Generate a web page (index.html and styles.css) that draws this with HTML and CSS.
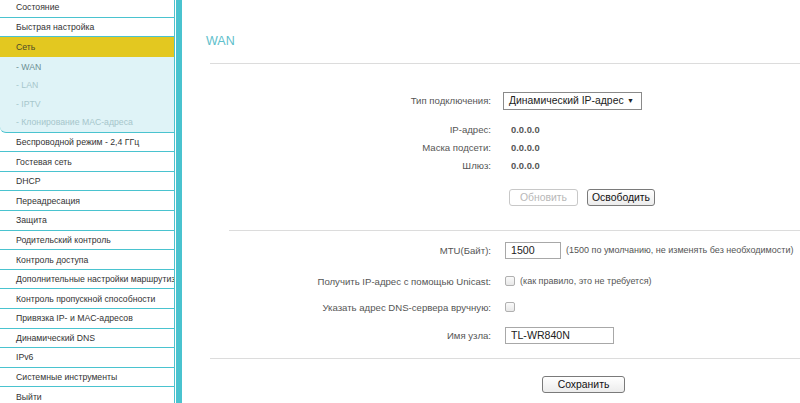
FILE: index.html
```html
<!DOCTYPE html>
<html lang="ru">
<head>
  <meta charset="UTF-8">
  <title>WAN</title>
  <link rel="stylesheet" href="styles.css">
</head>
<body>

  <!-- Left menu -->
  <aside class="sidebar">
    <ul class="menu">
      <li class="menu-item">Состояние</li>
      <li class="menu-item">Быстрая настройка</li>
      <li class="menu-item active">Сеть</li>
      <li class="submenu">
        <div class="sub-item current">- WAN</div>
        <div class="sub-item">- LAN</div>
        <div class="sub-item">- IPTV</div>
        <div class="sub-item">- Клонирование MAC-адреса</div>
      </li>
      <li class="menu-item">Беспроводной режим - 2,4 ГГц</li>
      <li class="menu-item">Гостевая сеть</li>
      <li class="menu-item">DHCP</li>
      <li class="menu-item">Переадресация</li>
      <li class="menu-item">Защита</li>
      <li class="menu-item">Родительский контроль</li>
      <li class="menu-item">Контроль доступа</li>
      <li class="menu-item">Дополнительные настройки маршрутиза</li>
      <li class="menu-item">Контроль пропускной способности</li>
      <li class="menu-item">Привязка IP- и MAC-адресов</li>
      <li class="menu-item">Динамический DNS</li>
      <li class="menu-item">IPv6</li>
      <li class="menu-item">Системные инструменты</li>
      <li class="menu-item">Выйти</li>
    </ul>
  </aside>

  <!-- Main panel -->
  <main class="content">
    <h1 class="page-title">WAN</h1>
    <hr class="divider">

    <section class="form-block first">
      <div class="row row-select">
        <span class="label">Тип подключения:</span>
        <div class="select">
          <span>Динамический IP-адрес</span>
          <span class="arrow">&#9660;</span>
        </div>
      </div>
      <div class="row row-info">
        <span class="label">IP-адрес:</span>
        <span class="value">0.0.0.0</span>
      </div>
      <div class="row row-info">
        <span class="label">Маска подсети:</span>
        <span class="value">0.0.0.0</span>
      </div>
      <div class="row row-info">
        <span class="label">Шлюз:</span>
        <span class="value">0.0.0.0</span>
      </div>
      <div class="row row-buttons">
        <span class="label"></span>
        <div class="buttons">
          <button class="btn disabled" disabled>Обновить</button>
          <button class="btn">Освободить</button>
        </div>
      </div>
    </section>

    <hr class="divider short">

    <section class="form-block second">
      <div class="row row-mtu">
        <span class="label">MTU(Байт):</span>
        <div class="field">
          <input class="text-input mtu" type="text" value="1500">
          <span class="hint">(1500 по умолчанию, не изменять без необходимости)</span>
        </div>
      </div>
      <div class="row row-unicast">
        <span class="label">Получить IP-адрес с помощью Unicast:</span>
        <div class="field">
          <span class="checkbox"></span>
          <span class="hint">(как правило, это не требуется)</span>
        </div>
      </div>
      <div class="row row-dns">
        <span class="label">Указать адрес DNS-сервера вручную:</span>
        <div class="field">
          <span class="checkbox"></span>
        </div>
      </div>
      <div class="row row-host">
        <span class="label">Имя узла:</span>
        <div class="field">
          <input class="text-input host" type="text" value="TL-WR840N">
        </div>
      </div>
    </section>

    <hr class="divider">

    <div class="save-bar">
      <button class="btn save">Сохранить</button>
    </div>
  </main>

</body>
</html>
```

FILE: styles.css
```css
/* Reset and basic styles */
* {
  margin: 0;
  padding: 0;
  box-sizing: border-box;
}

body {
  display: flex;
  width: 800px;
  height: 403px;
  overflow: hidden;
  background: #fff;
  font-family: "Liberation Sans", Arial, sans-serif;
  color: #444;
}

/* Sidebar */
.sidebar {
  width: 182px;
  flex-shrink: 0;
  padding-right: 1px;
  border-right: 6px solid #4ac3cf;
  background: #fff;
  overflow: hidden;
}

.menu {
  list-style: none;
  margin-top: -2px;
}

.menu-item {
  height: 19.6px;
  display: flex;
  align-items: center;
  padding-left: 16px;
  font-size: 8.7px;
  color: #333;
  white-space: nowrap;
  overflow: hidden;
  border-bottom: 1.6px solid #4ac3cf;
  border-right: 1px solid #4ac3cf;
}

.menu-item.active {
  background: #e3c820;
  color: #4a4a2a;
  border-bottom: none;
}

.submenu {
  background: #dff3f7;
  border-bottom: 1.6px solid #4ac3cf;
  border-right: 1px solid #4ac3cf;
  border-bottom-left-radius: 6px;
  padding-top: 0.5px;
}

.sub-item {
  height: 18.6px;
  display: flex;
  align-items: center;
  padding-left: 16px;
  font-size: 8.7px;
  color: #a6c6cb;
  white-space: nowrap;
}

.sub-item.current {
  color: #6c8f94;
}

/* Main panel */
.content {
  flex: 1;
  padding-left: 28px;
}

.page-title {
  margin-top: 34px;
  margin-left: -4px;
  height: 16px;
  font-size: 12.5px;
  font-weight: normal;
  color: #5ec0cc;
}

.divider {
  border: none;
  border-top: 1.5px solid #dcdcdc;
}

.page-title + .divider {
  margin-top: 13px;
}

.divider.short {
  margin-left: 19px;
}

.form-block.first {
  padding-top: 27px;
  padding-bottom: 24px;
}

.form-block.second {
  padding-top: 10px;
  padding-bottom: 14px;
}

.row {
  display: flex;
  align-items: center;
  font-size: 9.6px;
  white-space: nowrap;
}

.label {
  width: 295px;
  flex-shrink: 0;
  text-align: right;
  padding-right: 14px;
  color: #555;
}

.row-select { height: 19px; margin-bottom: 10px; }
.row-info { height: 18px; }
.row-buttons { height: 18px; margin-top: 14px; }
.row-mtu { height: 18px; margin-bottom: 13px; }
.row-unicast { height: 18px; margin-bottom: 8px; }
.row-dns { height: 18px; margin-bottom: 10px; }
.row-host { height: 18px; }

.value {
  font-weight: bold;
  color: #555;
  font-size: 9.4px;
  margin-left: 6px;
}

.select {
  width: 139px;
  height: 18px;
  margin-left: -2px;
  display: flex;
  align-items: center;
  justify-content: space-between;
  padding: 0 7px 0 5px;
  border: 1px solid #8a8a8a;
  font-size: 10.4px;
  color: #222;
}

.select .arrow {
  font-size: 7px;
}

.buttons {
  display: flex;
  gap: 9px;
  margin-left: 4px;
}

.btn {
  height: 17px;
  padding: 0 4px;
  border: 1px solid #7a7a7a;
  border-radius: 3px;
  background: linear-gradient(#ffffff, #ececec);
  font-family: "Liberation Sans", Arial, sans-serif;
  font-size: 10.4px;
  color: #111;
}

.btn.disabled {
  width: 69px;
  border-color: #c8c8c8;
  color: #b8b8b8;
  background: #fff;
}

.field {
  display: flex;
  align-items: center;
  gap: 5px;
}

.text-input {
  height: 17px;
  border: 1px solid #a8a8a8;
  padding: 0 5px;
  font-family: "Liberation Sans", Arial, sans-serif;
  font-size: 10.6px;
  color: #222;
  outline: none;
}

.text-input.mtu { width: 56px; }
.text-input.host { width: 109px; }

.hint {
  color: #555;
  font-size: 9px;
  white-space: nowrap;
}

.checkbox {
  width: 10px;
  height: 10px;
  border: 1px solid #b0b0b0;
  border-radius: 2px;
  background: linear-gradient(#fafafa, #e8e8e8);
}

/* Save button */
.save-bar {
  display: flex;
  padding-top: 17px;
  padding-left: 332px;
}

.btn.save {
  width: 83px;
  height: 17px;
}
```
